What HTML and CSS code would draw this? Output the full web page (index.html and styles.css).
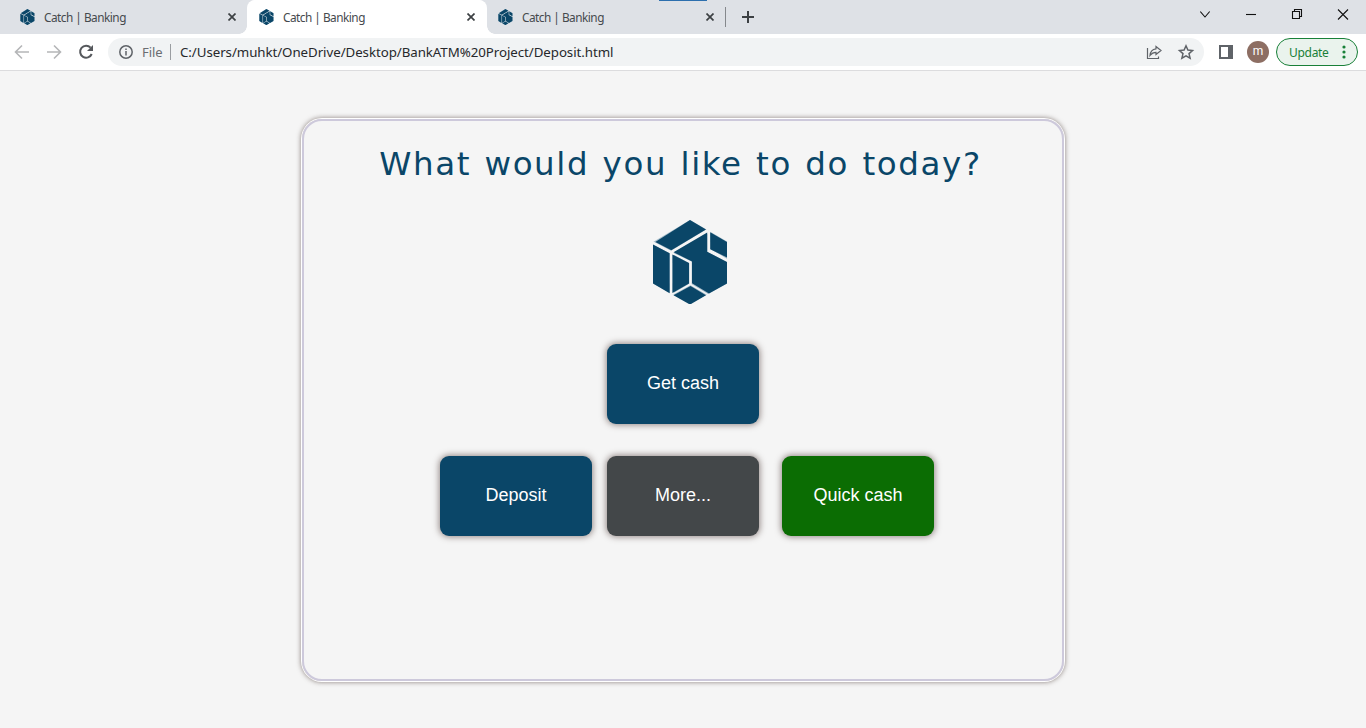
FILE: index.html
```html
<!DOCTYPE html>
<html lang="en">
<head>
<meta charset="utf-8">
<title>Catch | Banking</title>
<link rel="stylesheet" href="styles.css">
</head>
<body>
<svg class="defs" width="0" height="0">
  <symbol id="cube" viewBox="0 0 75 84">
    <path fill="#a9bfcc" d="M37 0 74 21.500V63.500L37 84 0 63.500V22z"/>
    <path fill="#f5f5f5" d="M0 22 18 31.500 53.500 10 57 12V29.500L74 39.500V41.500L55 31.500V12.500L20 33V74H17.500V33L0 24zM20 33.500 38 42V64.500L55.500 75 37.500 64.500 20 74 37 64V43z" stroke="#f5f5f5" stroke-width="1.300"/>
    <path fill="#0a4668" d="M2.300 22 37 0 53 9.500 18.300 30.300z"/>
    <path fill="#0a4668" d="M0 24.500 16.600 33.300V73.300L0 63.500z"/>
    <path fill="#0a4668" d="M57.200 12.300 74 22V37.500L57.200 29.200z"/>
    <path fill="#0a4668" d="M20.500 32.200 54.200 12.400V31.700L74 42V63.500L56 73.500 39 63.200V41.500z"/>
    <path fill="#0a4668" d="M19.400 34.500 36 43V63.600L19.400 73z"/>
    <path fill="#0a4668" d="M37.500 66 53 75.200 38 84H36L20.500 75.300z"/>
  </symbol>
  <symbol id="cross" viewBox="0 0 8 8">
    <path d="M.5.5 7.500 7.500M7.500.5.5 7.500" stroke="#3c4043" stroke-width="1.700"/>
  </symbol>
</svg>
<div class="tabstrip">
  <div class="tab"><svg class="favicon"><use href="#cube"/></svg><span class="tab-title">Catch | Banking</span><svg class="tab-close"><use href="#cross"/></svg></div>
  <div class="tab active"><svg class="favicon"><use href="#cube"/></svg><span class="tab-title">Catch | Banking</span><svg class="tab-close"><use href="#cross"/></svg></div>
  <div class="tab"><svg class="favicon"><use href="#cube"/></svg><span class="tab-title">Catch | Banking</span><svg class="tab-close"><use href="#cross"/></svg></div>
  <span class="tab-divider"></span>
  <svg class="new-tab" viewBox="0 0 12 12"><path d="M6 0V12M0 6H12" stroke="#3c4043" stroke-width="2"/></svg>
  <span class="top-line"></span>
  <svg class="window-controls" width="166" height="34" viewBox="1200 0 166 34" fill="none" stroke="#111" stroke-width="1.1">
    <path d="M1200.300 11.500 1205 17 1209.700 11.500"/>
    <path d="M1246 14.500H1256"/>
    <path d="M1292.500 11.500H1299.500V18.500H1292.500zM1294.500 11V9.500H1301.500V16.500H1300"/>
    <path d="M1338 9.500 1348 19.500M1348 9.500 1338 19.500"/>
  </svg>
</div>
<div class="toolbar">
  <svg class="nav" width="108" height="36" viewBox="0 34 108 36" fill="none" stroke="#b5b6b8" stroke-width="1.6">
    <path d="M29 52H16M22 45.500 15.500 52 22 58.500"/>
    <path d="M47 52H60M54 45.500 60.500 52 54 58.500"/>
    <path d="M90.600 47.700A6 6 0 1 0 91.700 54" stroke="#55585c" stroke-width="2"/>
    <path d="M93 45V51H87z" fill="#55585c" stroke="none"/>
  </svg>
  <div class="omnibox">
    <svg class="info" width="14" height="14" viewBox="0 0 14 14"><circle cx="7" cy="7" r="6.200" fill="none" stroke="#5f6368" stroke-width="1.500"/><path d="M7 6V10.500M7 3.400V5" stroke="#5f6368" stroke-width="1.500"/></svg>
    <span class="scheme">File</span>
    <span class="bar"></span>
    <span class="url">C:/Users/muhkt/OneDrive/Desktop/BankATM%20Project/Deposit.html</span>
    <svg class="page-actions" width="60" height="28" viewBox="1144 38 60 28" fill="none" stroke="#5f6368">
      <path d="M1147.500 48V58.500H1158.500V56.500" stroke-width="1.200"/>
      <path d="M1156 46.500 1161 50.500 1156 54.500V52.300C1153 52.300 1151.500 53.500 1150 55.500 1150.300 51.800 1152.500 49.200 1156 48.800z" stroke-width="1.200"/>
      <path d="M1186 45.800 1187.900 50.100 1192.500 50.500 1189 53.600 1190.100 58.200 1186 55.800 1181.900 58.200 1183 53.600 1179.500 50.500 1184.100 50.100z" stroke-width="1.500"/>
    </svg>
  </div>
  <svg class="side-panel" width="14" height="14" viewBox="0 0 14 14"><path fill="#5f6368" fill-rule="evenodd" d="M0 0H14V14H0zM2 2V12H9V2z"/></svg>
  <span class="avatar">m</span>
  <div class="update"><span class="update-label">Update</span><svg width="4" height="14" viewBox="0 0 4 14" fill="#188038"><circle cx="2" cy="2" r="1.600"/><circle cx="2" cy="7" r="1.600"/><circle cx="2" cy="12" r="1.600"/></svg></div>
</div>
<main class="page">
  <section class="atm">
    <h1 class="question">What would you like to do today?</h1>
    <svg class="logo"><use href="#cube"/></svg>
    <div class="choices">
      <button class="choice cash">Get cash</button>
      <button class="choice deposit">Deposit</button>
      <button class="choice more">More...</button>
      <button class="choice quick">Quick cash</button>
    </div>
  </section>
</main>
</body>
</html>
```
FILE: styles.css
```css
* { box-sizing: border-box; }
body {
  margin: 0;
  height: 728px;
  overflow: hidden;
  display: flex;
  flex-direction: column;
  background: #f5f5f5;
  font-family: "Noto Sans", sans-serif;
}
svg { display: block; flex: none; }
.defs { position: absolute; }

.tabstrip {
  position: relative;
  height: 34px;
  flex: none;
  display: flex;
  align-items: center;
  padding-left: 8px;
  background: #dee1e6;
}
.tab {
  position: relative;
  width: 239px;
  height: 34px;
  display: flex;
  align-items: center;
  padding: 0 10px 0 12px;
  font-size: 12px;
  color: #45494d;
}
.tab.active {
  background: #fff;
  border-radius: 8px 8px 0 0;
  box-shadow: 1px 0 0 #fff;
}
.tab.active::before,
.tab.active::after {
  content: "";
  position: absolute;
  bottom: 0;
  width: 8px;
  height: 8px;
}
.tab.active::before { left: -8px; background: radial-gradient(circle at 0 0, transparent 7.5px, #fff 8px); }
.tab.active::after { right: -9px; background: radial-gradient(circle at 100% 0, transparent 7.5px, #fff 8px); }
.favicon { width: 15px; height: 16px; }
.tab-title { margin-left: 9px; flex: 1; font-size: 11.8px; line-height: 16px; letter-spacing: -0.5px; white-space: nowrap; }
.tab-close { width: 8px; height: 8px; margin-right: 1px; }
.tab-divider { width: 1px; height: 20px; background: #85888c; }
.new-tab { width: 12px; height: 12px; margin-left: 16px; }
.top-line { position: absolute; left: 659px; top: 0; width: 48px; height: 1px; background: #2c6fae; }
.window-controls { margin-left: auto; }

.toolbar {
  height: 37px;
  flex: none;
  display: flex;
  align-items: center;
  background: #fff;
  border-bottom: 1px solid #dcdcde;
}
.omnibox {
  width: 1096px;
  height: 28px;
  display: flex;
  align-items: center;
  padding-left: 11px;
  border-radius: 14px;
  background: #f1f3f4;
  font-size: 13.3px;
}
.scheme { width: 28px; margin-left: 9px; color: #6a6d71; font-size: 13px; line-height: 18px; letter-spacing: -0.1px; }
.bar { width: 1px; height: 16px; margin-right: 9px; background: #9a9da1; }
.url { flex: 1; color: #26282b; line-height: 18px; letter-spacing: -0.06px; white-space: nowrap; }
.side-panel { margin-left: 15px; }
.avatar {
  width: 22px;
  height: 22px;
  margin-left: 14px;
  border-radius: 50%;
  background: #8d6e63;
  color: #fff;
  font: 12px/21px Roboto, sans-serif;
  text-align: center;
}
.update {
  width: 82px;
  height: 28px;
  margin-left: 7px;
  padding: 0 11px 0 12px;
  display: flex;
  align-items: center;
  justify-content: space-between;
  border: 1px solid #188038;
  border-radius: 14px;
  background: #eaf3ed;
  color: #188038;
  font-size: 12px;
  letter-spacing: -0.3px;
}

.page { flex: 1; display: flex; justify-content: center; align-items: flex-start; padding-top: 48px; }
.atm {
  width: 762px;
  height: 562px;
  display: flex;
  flex-direction: column;
  align-items: center;
  border: 2px solid #cdc9db;
  border-radius: 20px;
  box-shadow: 0 0 0 1px #fff, 0 0 5px 1px rgba(80, 65, 60, 0.65);
}
.question {
  margin: 22px 5px 0 0;
  color: #0a4668;
  font: 400 32.5px/42px "DejaVu Sans", sans-serif;
  letter-spacing: 1.6px;
  word-spacing: 1.5px;
  white-space: nowrap;
}
.logo { width: 75px; height: 84px; margin: 35px 0 0 15px; }
.choices {
  display: grid;
  grid-template-columns: 167px 175px 152px;
  grid-template-areas: ". cash ." "deposit more quick";
  grid-template-rows: 80px 80px;
  row-gap: 32px;
  margin: 40px 0 0 8px;
}
.choice {
  width: 152px;
  height: 80px;
  padding: 0 0 2px;
  border: 0;
  border-radius: 9px;
  box-shadow: 0 0 6px 1px rgba(70, 50, 45, 0.55);
  background: #0a4668;
  color: #fff;
  font: 18px "Liberation Sans", Arial, sans-serif;
}
.cash { grid-area: cash; }
.deposit { grid-area: deposit; }
.more { grid-area: more; background: #434749; }
.quick { grid-area: quick; background: #0b6d03; }
```
